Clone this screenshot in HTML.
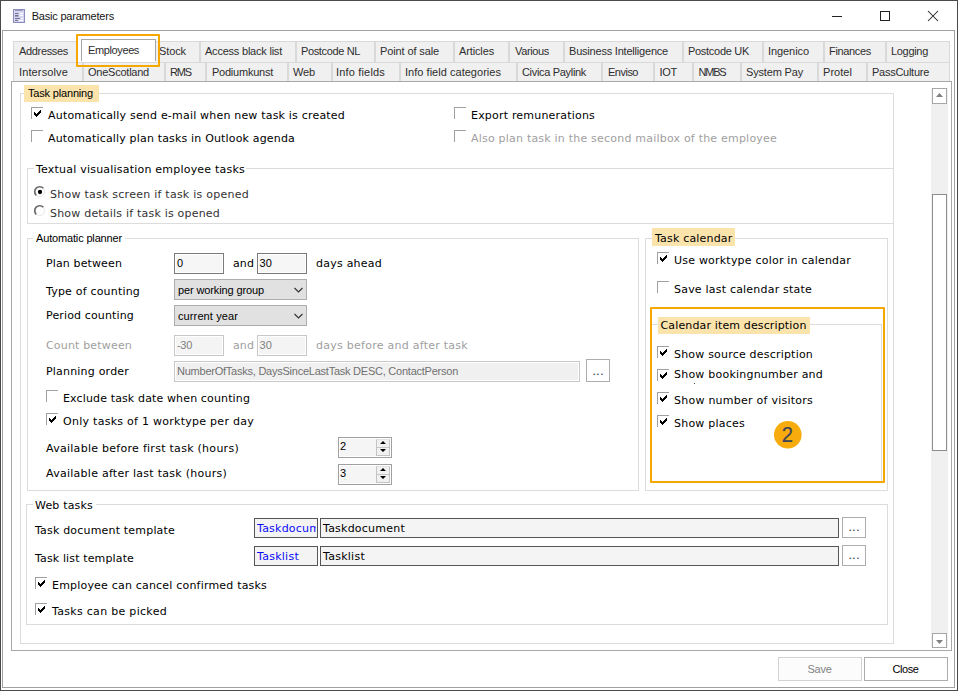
<!DOCTYPE html>
<html><head><meta charset="utf-8"><title>Basic parameters</title>
<style>
html,body{margin:0;padding:0;background:#fff;}
#w{position:relative;width:958px;height:691px;overflow:hidden;background:#fff;}
#w div,#w span,#w svg{position:absolute;}
#w span{white-space:nowrap;}
#w svg{overflow:visible;}
</style></head><body><div id="w"><div style="left:0px;top:0px;width:958px;height:691px;background:#fff;border:1px solid #4a4a4a;box-sizing:border-box"></div><svg style="left:13px;top:9px" width="12" height="14" viewBox="0 0 12 14"><rect x="0.5" y="0.5" width="11" height="13" fill="#d6d6f0" stroke="#8c8cbc"/><rect x="2" y="1" width="8" height="1" fill="#9c9cc0"/><rect x="2" y="4" width="3.5" height="1" fill="#70708c"/><rect x="6.5" y="4" width="3.5" height="1" fill="#fff"/><rect x="2" y="6" width="3.5" height="1" fill="#70708c"/><rect x="6.5" y="6" width="3.5" height="1" fill="#fff"/><rect x="2" y="7" width="3.5" height="1" fill="#9c9cc0"/><rect x="2" y="9" width="5" height="1" fill="#70708c"/><rect x="8" y="9" width="2" height="1" fill="#fff"/><rect x="2" y="11" width="3" height="1" fill="#70708c"/><rect x="6" y="11" width="4" height="1" fill="#fff"/></svg><span style="left:31.7px;top:8.19px;line-height:16px;font-family:'Liberation Sans', sans-serif;font-size:11px;color:#151515;letter-spacing:-0.206px;">Basic parameters</span><svg style="left:820px;top:5px" width="130" height="22" viewBox="0 0 130 22"><path d="M12 11.5 H22" stroke="#222" stroke-width="1" fill="none"/><rect x="60.5" y="6.5" width="9" height="9" stroke="#222" stroke-width="1" fill="none"/><path d="M108 6 L118 16 M118 6 L108 16" stroke="#222" stroke-width="1.05" fill="none"/></svg><div style="left:2px;top:30px;width:953px;height:658px;background:#fff;border:1px solid #a0a0a0;box-sizing:border-box"></div><div style="left:13px;top:41px;width:64px;height:21px;background:#f0f0f0;border:1px solid #d9d9d9;border-bottom:none;box-sizing:border-box"></div><span style="left:19px;top:43.19px;line-height:16px;font-family:'Liberation Sans', sans-serif;font-size:11px;color:#2e2e2e;letter-spacing:-0.332px;">Addresses</span><div style="left:155px;top:41px;width:45px;height:21px;background:#f0f0f0;border:1px solid #d9d9d9;border-bottom:none;box-sizing:border-box"></div><span style="left:159px;top:43.19px;line-height:16px;font-family:'Liberation Sans', sans-serif;font-size:11px;color:#2e2e2e;letter-spacing:-0.103px;">Stock</span><div style="left:200px;top:41px;width:96px;height:21px;background:#f0f0f0;border:1px solid #d9d9d9;border-bottom:none;box-sizing:border-box"></div><span style="left:205px;top:43.19px;line-height:16px;font-family:'Liberation Sans', sans-serif;font-size:11px;color:#2e2e2e;letter-spacing:-0.218px;">Access black list</span><div style="left:296px;top:41px;width:79px;height:21px;background:#f0f0f0;border:1px solid #d9d9d9;border-bottom:none;box-sizing:border-box"></div><span style="left:301px;top:43.19px;line-height:16px;font-family:'Liberation Sans', sans-serif;font-size:11px;color:#2e2e2e;letter-spacing:-0.362px;">Postcode NL</span><div style="left:375px;top:41px;width:79px;height:21px;background:#f0f0f0;border:1px solid #d9d9d9;border-bottom:none;box-sizing:border-box"></div><span style="left:380px;top:43.19px;line-height:16px;font-family:'Liberation Sans', sans-serif;font-size:11px;color:#2e2e2e;letter-spacing:-0.119px;">Point of sale</span><div style="left:454px;top:41px;width:55px;height:21px;background:#f0f0f0;border:1px solid #d9d9d9;border-bottom:none;box-sizing:border-box"></div><span style="left:459px;top:43.19px;line-height:16px;font-family:'Liberation Sans', sans-serif;font-size:11px;color:#2e2e2e;letter-spacing:-0.133px;">Articles</span><div style="left:509px;top:41px;width:55px;height:21px;background:#f0f0f0;border:1px solid #d9d9d9;border-bottom:none;box-sizing:border-box"></div><span style="left:515px;top:43.19px;line-height:16px;font-family:'Liberation Sans', sans-serif;font-size:11px;color:#2e2e2e;letter-spacing:-0.355px;">Various</span><div style="left:564px;top:41px;width:119px;height:21px;background:#f0f0f0;border:1px solid #d9d9d9;border-bottom:none;box-sizing:border-box"></div><span style="left:569px;top:43.19px;line-height:16px;font-family:'Liberation Sans', sans-serif;font-size:11px;color:#2e2e2e;letter-spacing:-0.207px;">Business Intelligence</span><div style="left:683px;top:41px;width:80px;height:21px;background:#f0f0f0;border:1px solid #d9d9d9;border-bottom:none;box-sizing:border-box"></div><span style="left:688px;top:43.19px;line-height:16px;font-family:'Liberation Sans', sans-serif;font-size:11px;color:#2e2e2e;letter-spacing:-0.291px;">Postcode UK</span><div style="left:763px;top:41px;width:61px;height:21px;background:#f0f0f0;border:1px solid #d9d9d9;border-bottom:none;box-sizing:border-box"></div><span style="left:768px;top:43.19px;line-height:16px;font-family:'Liberation Sans', sans-serif;font-size:11px;color:#2e2e2e;letter-spacing:-0.074px;">Ingenico</span><div style="left:824px;top:41px;width:62px;height:21px;background:#f0f0f0;border:1px solid #d9d9d9;border-bottom:none;box-sizing:border-box"></div><span style="left:829px;top:43.19px;line-height:16px;font-family:'Liberation Sans', sans-serif;font-size:11px;color:#2e2e2e;letter-spacing:-0.330px;">Finances</span><div style="left:886px;top:41px;width:64px;height:21px;background:#f0f0f0;border:1px solid #d9d9d9;border-bottom:none;box-sizing:border-box"></div><span style="left:891px;top:43.19px;line-height:16px;font-family:'Liberation Sans', sans-serif;font-size:11px;color:#2e2e2e;letter-spacing:-0.308px;">Logging</span><div style="left:13px;top:62px;width:70px;height:20px;background:#f0f0f0;border:1px solid #d9d9d9;border-bottom:none;box-sizing:border-box"></div><span style="left:19px;top:64.19px;line-height:16px;font-family:'Liberation Sans', sans-serif;font-size:11px;color:#2e2e2e;letter-spacing:0.130px;">Intersolve</span><div style="left:83px;top:62px;width:82px;height:20px;background:#f0f0f0;border:1px solid #d9d9d9;border-bottom:none;box-sizing:border-box"></div><span style="left:88px;top:64.19px;line-height:16px;font-family:'Liberation Sans', sans-serif;font-size:11px;color:#2e2e2e;letter-spacing:-0.237px;">OneScotland</span><div style="left:165px;top:62px;width:41px;height:20px;background:#f0f0f0;border:1px solid #d9d9d9;border-bottom:none;box-sizing:border-box"></div><span style="left:170px;top:64.19px;line-height:16px;font-family:'Liberation Sans', sans-serif;font-size:11px;color:#2e2e2e;letter-spacing:-1.151px;">RMS</span><div style="left:206px;top:62px;width:82px;height:20px;background:#f0f0f0;border:1px solid #d9d9d9;border-bottom:none;box-sizing:border-box"></div><span style="left:212px;top:64.19px;line-height:16px;font-family:'Liberation Sans', sans-serif;font-size:11px;color:#2e2e2e;letter-spacing:-0.236px;">Podiumkunst</span><div style="left:288px;top:62px;width:44px;height:20px;background:#f0f0f0;border:1px solid #d9d9d9;border-bottom:none;box-sizing:border-box"></div><span style="left:293px;top:64.19px;line-height:16px;font-family:'Liberation Sans', sans-serif;font-size:11px;color:#2e2e2e;letter-spacing:-0.141px;">Web</span><div style="left:332px;top:62px;width:68px;height:20px;background:#f0f0f0;border:1px solid #d9d9d9;border-bottom:none;box-sizing:border-box"></div><span style="left:336px;top:64.19px;line-height:16px;font-family:'Liberation Sans', sans-serif;font-size:11px;color:#2e2e2e;letter-spacing:0.173px;">Info fields</span><div style="left:400px;top:62px;width:117px;height:20px;background:#f0f0f0;border:1px solid #d9d9d9;border-bottom:none;box-sizing:border-box"></div><span style="left:405px;top:64.19px;line-height:16px;font-family:'Liberation Sans', sans-serif;font-size:11px;color:#2e2e2e;letter-spacing:0.029px;">Info field categories</span><div style="left:517px;top:62px;width:85px;height:20px;background:#f0f0f0;border:1px solid #d9d9d9;border-bottom:none;box-sizing:border-box"></div><span style="left:522px;top:64.19px;line-height:16px;font-family:'Liberation Sans', sans-serif;font-size:11px;color:#2e2e2e;letter-spacing:-0.319px;">Civica Paylink</span><div style="left:602px;top:62px;width:52px;height:20px;background:#f0f0f0;border:1px solid #d9d9d9;border-bottom:none;box-sizing:border-box"></div><span style="left:608px;top:64.19px;line-height:16px;font-family:'Liberation Sans', sans-serif;font-size:11px;color:#2e2e2e;letter-spacing:-0.505px;">Enviso</span><div style="left:654px;top:62px;width:39px;height:20px;background:#f0f0f0;border:1px solid #d9d9d9;border-bottom:none;box-sizing:border-box"></div><span style="left:659.5px;top:64.19px;line-height:16px;font-family:'Liberation Sans', sans-serif;font-size:11px;color:#2e2e2e;letter-spacing:-0.281px;">IOT</span><div style="left:693px;top:62px;width:48px;height:20px;background:#f0f0f0;border:1px solid #d9d9d9;border-bottom:none;box-sizing:border-box"></div><span style="left:698.5px;top:64.19px;line-height:16px;font-family:'Liberation Sans', sans-serif;font-size:11px;color:#2e2e2e;letter-spacing:-1.195px;">NMBS</span><div style="left:741px;top:62px;width:77px;height:20px;background:#f0f0f0;border:1px solid #d9d9d9;border-bottom:none;box-sizing:border-box"></div><span style="left:746px;top:64.19px;line-height:16px;font-family:'Liberation Sans', sans-serif;font-size:11px;color:#2e2e2e;letter-spacing:-0.169px;">System Pay</span><div style="left:818px;top:62px;width:49px;height:20px;background:#f0f0f0;border:1px solid #d9d9d9;border-bottom:none;box-sizing:border-box"></div><span style="left:823px;top:64.19px;line-height:16px;font-family:'Liberation Sans', sans-serif;font-size:11px;color:#2e2e2e;letter-spacing:0.042px;">Protel</span><div style="left:867px;top:62px;width:83px;height:20px;background:#f0f0f0;border:1px solid #d9d9d9;border-bottom:none;box-sizing:border-box"></div><span style="left:872px;top:64.19px;line-height:16px;font-family:'Liberation Sans', sans-serif;font-size:11px;color:#2e2e2e;letter-spacing:-0.266px;">PassCulture</span><div style="left:81px;top:39px;width:75px;height:23px;background:#fff"></div><div style="left:81px;top:39px;width:75px;height:22px;background:#fff;border:1px solid #a6a6a6;border-bottom:none;box-sizing:border-box"></div><span style="left:88px;top:42.19px;line-height:16px;font-family:'Liberation Sans', sans-serif;font-size:11px;color:#2e2e2e;letter-spacing:-0.380px;">Employees</span><div style="left:76px;top:34px;width:84px;height:33px;border:2px solid #f5a800;box-sizing:border-box;border-radius:1px"></div><div style="left:11px;top:81px;width:941px;height:570px;background:#fff;border:1px solid #a8a8a8;box-sizing:border-box"></div><div style="left:931px;top:88px;width:17px;height:560px;background:#f0f0f0"></div><div style="left:932px;top:88px;width:15px;height:16px;background:#fff;border:1px solid #a6a6a6;box-sizing:border-box"></div><svg style="left:936px;top:93px" width="7" height="4" viewBox="0 0 7 4"><path d="M0 4 L3.5 0 L7 4 Z" fill="#808080"/></svg><div style="left:932px;top:633px;width:15px;height:15px;background:#fff;border:1px solid #a6a6a6;box-sizing:border-box"></div><svg style="left:936px;top:640px" width="7" height="4" viewBox="0 0 7 4"><path d="M0 0 L3.5 4 L7 0 Z" fill="#808080"/></svg><div style="left:932px;top:194px;width:15px;height:257px;background:#fff;border:1px solid #8c8c8c;box-sizing:border-box"></div><div style="left:20px;top:93px;width:1px;height:551px;background:#dcdcdc"></div><div style="left:893px;top:93px;width:1px;height:551px;background:#dcdcdc"></div><div style="left:20px;top:643px;width:874px;height:1px;background:#dcdcdc"></div><div style="left:20px;top:93px;width:4px;height:1px;background:#dcdcdc"></div><div style="left:99px;top:93px;width:795px;height:1px;background:#dcdcdc"></div><div style="left:24px;top:85px;width:75px;height:17px;background:#fbe3ac"></div><span style="left:28px;top:85.19px;line-height:16px;font-family:'Liberation Sans', sans-serif;font-size:11px;color:#000;letter-spacing:-0.175px;">Task planning</span><div style="left:31px;top:107px;width:12px;height:12px;background:#fff;border-top:1px solid #a0a0a0;border-left:1px solid #a0a0a0;box-sizing:border-box"></div><svg style="left:31px;top:107px" width="12" height="12" viewBox="0 0 12 12" fill="#000"><rect x="3" y="5" width="1" height="3"/><rect x="4" y="6" width="1" height="3"/><rect x="5" y="7" width="1" height="3"/><rect x="6" y="6" width="1" height="3"/><rect x="7" y="5" width="1" height="3"/><rect x="8" y="4" width="1" height="3"/><rect x="9" y="3" width="1" height="3"/></svg><span style="left:48px;top:108.19px;line-height:16px;font-family:'DejaVu Sans', sans-serif;font-size:11px;color:#000;letter-spacing:0.194px;">Automatically send e-mail when new task is created</span><div style="left:31px;top:130px;width:12px;height:12px;background:#fff;border-top:1px solid #a0a0a0;border-left:1px solid #a0a0a0;box-sizing:border-box"></div><span style="left:48px;top:131.19px;line-height:16px;font-family:'DejaVu Sans', sans-serif;font-size:11px;color:#000;letter-spacing:0.168px;">Automatically plan tasks in Outlook agenda</span><div style="left:454px;top:107px;width:12px;height:12px;background:#fff;border-top:1px solid #a0a0a0;border-left:1px solid #a0a0a0;box-sizing:border-box"></div><span style="left:471px;top:108.19px;line-height:16px;font-family:'DejaVu Sans', sans-serif;font-size:11px;color:#000;letter-spacing:0.198px;">Export remunerations</span><div style="left:454px;top:130px;width:12px;height:12px;background:#fff;border-top:1px solid #a0a0a0;border-left:1px solid #a0a0a0;box-sizing:border-box"></div><span style="left:471px;top:131.19px;line-height:16px;font-family:'DejaVu Sans', sans-serif;font-size:11px;color:#a0a0a0;letter-spacing:0.209px;">Also plan task in the second mailbox of the employee</span><div style="left:27px;top:168px;width:1px;height:56px;background:#dcdcdc"></div><div style="left:893px;top:168px;width:1px;height:56px;background:#dcdcdc"></div><div style="left:27px;top:223px;width:867px;height:1px;background:#dcdcdc"></div><div style="left:27px;top:168px;width:7px;height:1px;background:#dcdcdc"></div><div style="left:246px;top:168px;width:648px;height:1px;background:#dcdcdc"></div><span style="left:36px;top:162.19px;line-height:16px;font-family:'DejaVu Sans', sans-serif;font-size:11px;color:#000;letter-spacing:0.212px;">Textual visualisation employee tasks</span><svg style="left:34px;top:186px" width="12" height="12" viewBox="0 0 12 12"><circle cx="5.6" cy="5.6" r="5" fill="#fff" stroke="#e6e6e6" stroke-width="1"/><path d="M2.2 9.3 A4.9 4.9 0 0 1 9.3 2.2" fill="none" stroke="#6a6a6a" stroke-width="1.7"/><circle cx="6" cy="6" r="2.15" fill="#000"/></svg><span style="left:50px;top:186.59px;line-height:16px;font-family:'DejaVu Sans', sans-serif;font-size:11px;color:#333;letter-spacing:0.251px;">Show task screen if task is opened</span><svg style="left:34px;top:205px" width="12" height="12" viewBox="0 0 12 12"><circle cx="5.6" cy="5.6" r="5" fill="#fff" stroke="#e6e6e6" stroke-width="1"/><path d="M2.2 9.3 A4.9 4.9 0 0 1 9.3 2.2" fill="none" stroke="#6a6a6a" stroke-width="1.7"/></svg><span style="left:50px;top:205.69px;line-height:16px;font-family:'DejaVu Sans', sans-serif;font-size:11px;color:#333;letter-spacing:0.204px;">Show details if task is opened</span><div style="left:27px;top:238px;width:1px;height:253px;background:#dcdcdc"></div><div style="left:638px;top:238px;width:1px;height:253px;background:#dcdcdc"></div><div style="left:27px;top:490px;width:612px;height:1px;background:#dcdcdc"></div><div style="left:27px;top:238px;width:6px;height:1px;background:#dcdcdc"></div><div style="left:125px;top:238px;width:514px;height:1px;background:#dcdcdc"></div><span style="left:36px;top:230.19px;line-height:16px;font-family:'Liberation Sans', sans-serif;font-size:11px;color:#000;letter-spacing:-0.157px;">Automatic planner</span><span style="left:46px;top:256.19px;line-height:16px;font-family:'DejaVu Sans', sans-serif;font-size:11px;color:#000;letter-spacing:0.128px;">Plan between</span><div style="left:174px;top:253px;width:50px;height:21px;background:#f6f6f6;border:1px solid #7a7a7a;box-sizing:border-box;box-shadow:inset 0 0 0 1px #fff;"></div><span style="left:177px;top:255.19px;line-height:16px;font-family:'Liberation Sans', sans-serif;font-size:11px;color:#000;letter-spacing:-0.125px;">0</span><span style="left:233px;top:256.19px;line-height:16px;font-family:'DejaVu Sans', sans-serif;font-size:11px;color:#000;letter-spacing:0.099px;">and</span><div style="left:257px;top:253px;width:50px;height:21px;background:#f6f6f6;border:1px solid #7a7a7a;box-sizing:border-box;box-shadow:inset 0 0 0 1px #fff;"></div><span style="left:259.5px;top:255.19px;line-height:16px;font-family:'Liberation Sans', sans-serif;font-size:11px;color:#000;letter-spacing:0.125px;">30</span><span style="left:316px;top:256.19px;line-height:16px;font-family:'DejaVu Sans', sans-serif;font-size:11px;color:#000;letter-spacing:0.233px;">days ahead</span><span style="left:46px;top:284.19px;line-height:16px;font-family:'DejaVu Sans', sans-serif;font-size:11px;color:#000;letter-spacing:0.193px;">Type of counting</span><div style="left:174px;top:279px;width:133px;height:21px;background:#e1e1e1;border:1px solid #adadad;box-sizing:border-box;"></div><span style="left:178px;top:282.19px;line-height:16px;font-family:'Liberation Sans', sans-serif;font-size:11px;color:#000;letter-spacing:-0.121px;">per working group</span><svg style="left:294px;top:287px" width="9" height="6" viewBox="0 0 9 6"><path d="M0.5 1 L4.5 5 L8.5 1" stroke="#333" stroke-width="1.15" fill="none"/></svg><span style="left:46px;top:308.19px;line-height:16px;font-family:'DejaVu Sans', sans-serif;font-size:11px;color:#000;letter-spacing:0.144px;">Period counting</span><div style="left:174px;top:305px;width:133px;height:21px;background:#e1e1e1;border:1px solid #adadad;box-sizing:border-box;"></div><span style="left:178px;top:308.19px;line-height:16px;font-family:'Liberation Sans', sans-serif;font-size:11px;color:#000;letter-spacing:0.108px;">current year</span><svg style="left:294px;top:313px" width="9" height="6" viewBox="0 0 9 6"><path d="M0.5 1 L4.5 5 L8.5 1" stroke="#333" stroke-width="1.15" fill="none"/></svg><span style="left:46px;top:338.19px;line-height:16px;font-family:'DejaVu Sans', sans-serif;font-size:11px;color:#a0a0a0;letter-spacing:0.174px;">Count between</span><div style="left:174px;top:335px;width:50px;height:21px;background:#f4f4f4;border:1px solid #c8c8c8;box-sizing:border-box;box-shadow:inset 0 0 0 1px #fff;"></div><span style="left:177px;top:337.19px;line-height:16px;font-family:'Liberation Sans', sans-serif;font-size:11px;color:#808080;letter-spacing:-0.302px;">-30</span><span style="left:233px;top:338.19px;line-height:16px;font-family:'DejaVu Sans', sans-serif;font-size:11px;color:#a0a0a0;letter-spacing:0.099px;">and</span><div style="left:257px;top:335px;width:50px;height:21px;background:#f4f4f4;border:1px solid #c8c8c8;box-sizing:border-box;box-shadow:inset 0 0 0 1px #fff;"></div><span style="left:259.5px;top:337.19px;line-height:16px;font-family:'Liberation Sans', sans-serif;font-size:11px;color:#808080;letter-spacing:0.125px;">30</span><span style="left:316px;top:338.19px;line-height:16px;font-family:'DejaVu Sans', sans-serif;font-size:11px;color:#a0a0a0;letter-spacing:0.260px;">days before and after task</span><span style="left:46px;top:364.19px;line-height:16px;font-family:'DejaVu Sans', sans-serif;font-size:11px;color:#000;letter-spacing:0.199px;">Planning order</span><div style="left:174px;top:361px;width:406px;height:21px;background:#f0f0f0;border:1px solid #c8c8c8;box-sizing:border-box;box-shadow:inset 0 0 0 1px #fff;"></div><span style="left:177px;top:363.19px;line-height:16px;font-family:'Liberation Sans', sans-serif;font-size:11px;color:#707070;letter-spacing:-0.239px;">NumberOfTasks, DaysSinceLastTask DESC, ContactPerson</span><div style="left:586px;top:359px;width:24px;height:23px;background:#fff;border:1px solid #adadad;box-sizing:border-box"></div><span style="left:592.5px;top:362.84px;line-height:16px;font-family:'Liberation Sans', sans-serif;font-size:12px;color:#1a1a50;letter-spacing:0.495px;">...</span><div style="left:46px;top:390px;width:12px;height:12px;background:#fff;border-top:1px solid #a0a0a0;border-left:1px solid #a0a0a0;box-sizing:border-box"></div><span style="left:63px;top:391.19px;line-height:16px;font-family:'DejaVu Sans', sans-serif;font-size:11px;color:#000;letter-spacing:0.136px;">Exclude task date when counting</span><div style="left:46px;top:413px;width:12px;height:12px;background:#fff;border-top:1px solid #a0a0a0;border-left:1px solid #a0a0a0;box-sizing:border-box"></div><svg style="left:46px;top:413px" width="12" height="12" viewBox="0 0 12 12" fill="#000"><rect x="3" y="5" width="1" height="3"/><rect x="4" y="6" width="1" height="3"/><rect x="5" y="7" width="1" height="3"/><rect x="6" y="6" width="1" height="3"/><rect x="7" y="5" width="1" height="3"/><rect x="8" y="4" width="1" height="3"/><rect x="9" y="3" width="1" height="3"/></svg><span style="left:63px;top:414.19px;line-height:16px;font-family:'DejaVu Sans', sans-serif;font-size:11px;color:#000;letter-spacing:0.270px;">Only tasks of 1 worktype per day</span><span style="left:46px;top:441.19px;line-height:16px;font-family:'DejaVu Sans', sans-serif;font-size:11px;color:#000;letter-spacing:0.276px;">Available before first task (hours)</span><span style="left:46px;top:466.19px;line-height:16px;font-family:'DejaVu Sans', sans-serif;font-size:11px;color:#000;letter-spacing:0.263px;">Available after last task (hours)</span><div style="left:338px;top:437px;width:54px;height:21px;background:#f5f5f5;border:1px solid #a0a0a0;box-sizing:border-box;box-shadow:inset 0 0 0 1px #fff;"></div><span style="left:340px;top:438.19px;line-height:16px;font-family:'Liberation Sans', sans-serif;font-size:11px;color:#000;letter-spacing:0.375px;">2</span><div style="left:376px;top:439px;width:14px;height:9px;background:#f0f0f0;border:1px solid #c4c4c4;border-top-color:#e4e4e4;box-sizing:border-box"></div><div style="left:376px;top:447px;width:14px;height:9px;background:#f0f0f0;border:1px solid #c4c4c4;box-sizing:border-box"></div><svg style="left:380px;top:441px" width="6" height="12" viewBox="0 0 6 12"><path d="M0 3 L3 0 L6 3 Z M0 8 L3 11 L6 8 Z" fill="#000"/></svg><div style="left:338px;top:464px;width:54px;height:21px;background:#f5f5f5;border:1px solid #a0a0a0;box-sizing:border-box;box-shadow:inset 0 0 0 1px #fff;"></div><span style="left:340px;top:465.19px;line-height:16px;font-family:'Liberation Sans', sans-serif;font-size:11px;color:#000;letter-spacing:0.375px;">3</span><div style="left:376px;top:466px;width:14px;height:9px;background:#f0f0f0;border:1px solid #c4c4c4;border-top-color:#e4e4e4;box-sizing:border-box"></div><div style="left:376px;top:474px;width:14px;height:9px;background:#f0f0f0;border:1px solid #c4c4c4;box-sizing:border-box"></div><svg style="left:380px;top:468px" width="6" height="12" viewBox="0 0 6 12"><path d="M0 3 L3 0 L6 3 Z M0 8 L3 11 L6 8 Z" fill="#000"/></svg><div style="left:645px;top:238px;width:1px;height:253px;background:#dcdcdc"></div><div style="left:887px;top:238px;width:1px;height:253px;background:#dcdcdc"></div><div style="left:645px;top:490px;width:243px;height:1px;background:#dcdcdc"></div><div style="left:645px;top:238px;width:7px;height:1px;background:#dcdcdc"></div><div style="left:735px;top:238px;width:153px;height:1px;background:#dcdcdc"></div><div style="left:652px;top:228px;width:83px;height:18px;background:#fbe3ac"></div><span style="left:655px;top:230.89px;line-height:16px;font-family:'DejaVu Sans', sans-serif;font-size:11px;color:#000;letter-spacing:0.186px;">Task calendar</span><div style="left:657px;top:252px;width:12px;height:12px;background:#fff;border-top:1px solid #a0a0a0;border-left:1px solid #a0a0a0;box-sizing:border-box"></div><svg style="left:657px;top:252px" width="12" height="12" viewBox="0 0 12 12" fill="#000"><rect x="3" y="5" width="1" height="3"/><rect x="4" y="6" width="1" height="3"/><rect x="5" y="7" width="1" height="3"/><rect x="6" y="6" width="1" height="3"/><rect x="7" y="5" width="1" height="3"/><rect x="8" y="4" width="1" height="3"/><rect x="9" y="3" width="1" height="3"/></svg><span style="left:674px;top:253.19px;line-height:16px;font-family:'DejaVu Sans', sans-serif;font-size:11px;color:#000;letter-spacing:0.211px;">Use worktype color in calendar</span><div style="left:657px;top:281px;width:12px;height:12px;background:#fff;border-top:1px solid #a0a0a0;border-left:1px solid #a0a0a0;box-sizing:border-box"></div><span style="left:674px;top:281.69px;line-height:16px;font-family:'DejaVu Sans', sans-serif;font-size:11px;color:#000;letter-spacing:0.207px;">Save last calendar state</span><div style="left:651px;top:324px;width:1px;height:159px;background:#dcdcdc"></div><div style="left:881px;top:324px;width:1px;height:159px;background:#dcdcdc"></div><div style="left:651px;top:482px;width:231px;height:1px;background:#dcdcdc"></div><div style="left:651px;top:324px;width:7px;height:1px;background:#dcdcdc"></div><div style="left:810px;top:324px;width:72px;height:1px;background:#dcdcdc"></div><div style="left:658px;top:317px;width:152px;height:17px;background:#fbe3ac"></div><span style="left:660.5px;top:317.69px;line-height:16px;font-family:'DejaVu Sans', sans-serif;font-size:11px;color:#000;letter-spacing:0.141px;">Calendar item description</span><div style="left:657px;top:346px;width:12px;height:12px;background:#fff;border-top:1px solid #a0a0a0;border-left:1px solid #a0a0a0;box-sizing:border-box"></div><svg style="left:657px;top:346px" width="12" height="12" viewBox="0 0 12 12" fill="#000"><rect x="3" y="5" width="1" height="3"/><rect x="4" y="6" width="1" height="3"/><rect x="5" y="7" width="1" height="3"/><rect x="6" y="6" width="1" height="3"/><rect x="7" y="5" width="1" height="3"/><rect x="8" y="4" width="1" height="3"/><rect x="9" y="3" width="1" height="3"/></svg><span style="left:674px;top:347.19px;line-height:16px;font-family:'DejaVu Sans', sans-serif;font-size:11px;color:#000;letter-spacing:0.201px;">Show source description</span><div style="left:657px;top:369px;width:12px;height:12px;background:#fff;border-top:1px solid #a0a0a0;border-left:1px solid #a0a0a0;box-sizing:border-box"></div><svg style="left:657px;top:369px" width="12" height="12" viewBox="0 0 12 12" fill="#000"><rect x="3" y="5" width="1" height="3"/><rect x="4" y="6" width="1" height="3"/><rect x="5" y="7" width="1" height="3"/><rect x="6" y="6" width="1" height="3"/><rect x="7" y="5" width="1" height="3"/><rect x="8" y="4" width="1" height="3"/><rect x="9" y="3" width="1" height="3"/></svg><span style="left:674px;top:367.19px;line-height:16px;font-family:'DejaVu Sans', sans-serif;font-size:11px;color:#000;letter-spacing:0.222px;">Show bookingnumber and</span><div style="left:694px;top:383.3px;width:1.2px;height:1.2px;background:#444"></div><div style="left:657px;top:392px;width:12px;height:12px;background:#fff;border-top:1px solid #a0a0a0;border-left:1px solid #a0a0a0;box-sizing:border-box"></div><svg style="left:657px;top:392px" width="12" height="12" viewBox="0 0 12 12" fill="#000"><rect x="3" y="5" width="1" height="3"/><rect x="4" y="6" width="1" height="3"/><rect x="5" y="7" width="1" height="3"/><rect x="6" y="6" width="1" height="3"/><rect x="7" y="5" width="1" height="3"/><rect x="8" y="4" width="1" height="3"/><rect x="9" y="3" width="1" height="3"/></svg><span style="left:674px;top:393.19px;line-height:16px;font-family:'DejaVu Sans', sans-serif;font-size:11px;color:#000;letter-spacing:0.245px;">Show number of visitors</span><div style="left:657px;top:415px;width:12px;height:12px;background:#fff;border-top:1px solid #a0a0a0;border-left:1px solid #a0a0a0;box-sizing:border-box"></div><svg style="left:657px;top:415px" width="12" height="12" viewBox="0 0 12 12" fill="#000"><rect x="3" y="5" width="1" height="3"/><rect x="4" y="6" width="1" height="3"/><rect x="5" y="7" width="1" height="3"/><rect x="6" y="6" width="1" height="3"/><rect x="7" y="5" width="1" height="3"/><rect x="8" y="4" width="1" height="3"/><rect x="9" y="3" width="1" height="3"/></svg><span style="left:674px;top:415.69px;line-height:16px;font-family:'DejaVu Sans', sans-serif;font-size:11px;color:#000;letter-spacing:0.226px;">Show places</span><div style="left:650px;top:307px;width:235px;height:176px;border:2px solid #f5a800;box-sizing:border-box;border-radius:1px"></div><svg style="left:773.8px;top:420.6px" width="28" height="28" viewBox="0 0 28 28"><circle cx="13.8" cy="13.8" r="13.8" fill="#f8ab0c"/><text x="0" y="0" transform="translate(13.5 21.2) scale(0.9 1)" text-anchor="middle" font-family="Liberation Sans, sans-serif" font-size="22.5" fill="#3d4557" stroke="#3d4557" stroke-width="0.2">2</text></svg><div style="left:26px;top:504px;width:1px;height:121px;background:#dcdcdc"></div><div style="left:887px;top:504px;width:1px;height:121px;background:#dcdcdc"></div><div style="left:26px;top:624px;width:862px;height:1px;background:#dcdcdc"></div><div style="left:26px;top:504px;width:7px;height:1px;background:#dcdcdc"></div><div style="left:96px;top:504px;width:792px;height:1px;background:#dcdcdc"></div><span style="left:35px;top:498.19px;line-height:16px;font-family:'DejaVu Sans', sans-serif;font-size:11px;color:#000;letter-spacing:0.181px;">Web tasks</span><span style="left:35px;top:523.19px;line-height:16px;font-family:'DejaVu Sans', sans-serif;font-size:11px;color:#000;letter-spacing:0.187px;">Task document template</span><div style="left:254px;top:518px;width:64px;height:20px;background:#f4f4f4;border:1px solid #555;box-sizing:border-box;"></div><span style="left:257px;top:521.19px;line-height:16px;font-family:'DejaVu Sans', sans-serif;font-size:11px;color:#0a0af5;clip-path:inset(0 23px 0 0);letter-spacing:0.229px;">Taskdocument</span><div style="left:320px;top:518px;width:519px;height:20px;background:#f4f4f4;border:1px solid #555;box-sizing:border-box;"></div><span style="left:323px;top:521.19px;line-height:16px;font-family:'DejaVu Sans', sans-serif;font-size:11px;color:#000;letter-spacing:0.229px;">Taskdocument</span><div style="left:842px;top:517px;width:24px;height:21px;background:#fff;border:1px solid #adadad;box-sizing:border-box"></div><span style="left:848.5px;top:518.84px;line-height:16px;font-family:'Liberation Sans', sans-serif;font-size:12px;color:#1a1a50;letter-spacing:0.495px;">...</span><span style="left:35px;top:551.19px;line-height:16px;font-family:'DejaVu Sans', sans-serif;font-size:11px;color:#000;letter-spacing:0.136px;">Task list template</span><div style="left:254px;top:546px;width:64px;height:20px;background:#f4f4f4;border:1px solid #555;box-sizing:border-box;"></div><span style="left:257px;top:549.19px;line-height:16px;font-family:'DejaVu Sans', sans-serif;font-size:11px;color:#0a0af5;letter-spacing:0.262px;">Tasklist</span><div style="left:320px;top:546px;width:519px;height:20px;background:#f4f4f4;border:1px solid #555;box-sizing:border-box;"></div><span style="left:323px;top:549.19px;line-height:16px;font-family:'DejaVu Sans', sans-serif;font-size:11px;color:#000;letter-spacing:0.262px;">Tasklist</span><div style="left:842px;top:545px;width:24px;height:21px;background:#fff;border:1px solid #adadad;box-sizing:border-box"></div><span style="left:848.5px;top:547.34px;line-height:16px;font-family:'Liberation Sans', sans-serif;font-size:12px;color:#1a1a50;letter-spacing:0.495px;">...</span><div style="left:35px;top:577px;width:12px;height:12px;background:#fff;border-top:1px solid #a0a0a0;border-left:1px solid #a0a0a0;box-sizing:border-box"></div><svg style="left:35px;top:577px" width="12" height="12" viewBox="0 0 12 12" fill="#000"><rect x="3" y="5" width="1" height="3"/><rect x="4" y="6" width="1" height="3"/><rect x="5" y="7" width="1" height="3"/><rect x="6" y="6" width="1" height="3"/><rect x="7" y="5" width="1" height="3"/><rect x="8" y="4" width="1" height="3"/><rect x="9" y="3" width="1" height="3"/></svg><span style="left:52px;top:578.19px;line-height:16px;font-family:'DejaVu Sans', sans-serif;font-size:11px;color:#000;letter-spacing:0.194px;">Employee can cancel confirmed tasks</span><div style="left:35px;top:603px;width:12px;height:12px;background:#fff;border-top:1px solid #a0a0a0;border-left:1px solid #a0a0a0;box-sizing:border-box"></div><svg style="left:35px;top:603px" width="12" height="12" viewBox="0 0 12 12" fill="#000"><rect x="3" y="5" width="1" height="3"/><rect x="4" y="6" width="1" height="3"/><rect x="5" y="7" width="1" height="3"/><rect x="6" y="6" width="1" height="3"/><rect x="7" y="5" width="1" height="3"/><rect x="8" y="4" width="1" height="3"/><rect x="9" y="3" width="1" height="3"/></svg><span style="left:52px;top:604.19px;line-height:16px;font-family:'DejaVu Sans', sans-serif;font-size:11px;color:#000;letter-spacing:0.300px;">Tasks can be picked</span><div style="left:778px;top:657px;width:84px;height:24px;background:#fcfcfc;border:1px solid #d4d4d4;box-sizing:border-box"></div><span style="left:807.5px;top:661.19px;line-height:16px;font-family:'Liberation Sans', sans-serif;font-size:11px;color:#838383;letter-spacing:-0.270px;">Save</span><div style="left:864px;top:657px;width:84px;height:24px;background:#fff;border:1px solid #adadad;box-sizing:border-box"></div><span style="left:892.5px;top:661.19px;line-height:16px;font-family:'Liberation Sans', sans-serif;font-size:11px;color:#000;letter-spacing:-0.425px;">Close</span></div></body></html>
